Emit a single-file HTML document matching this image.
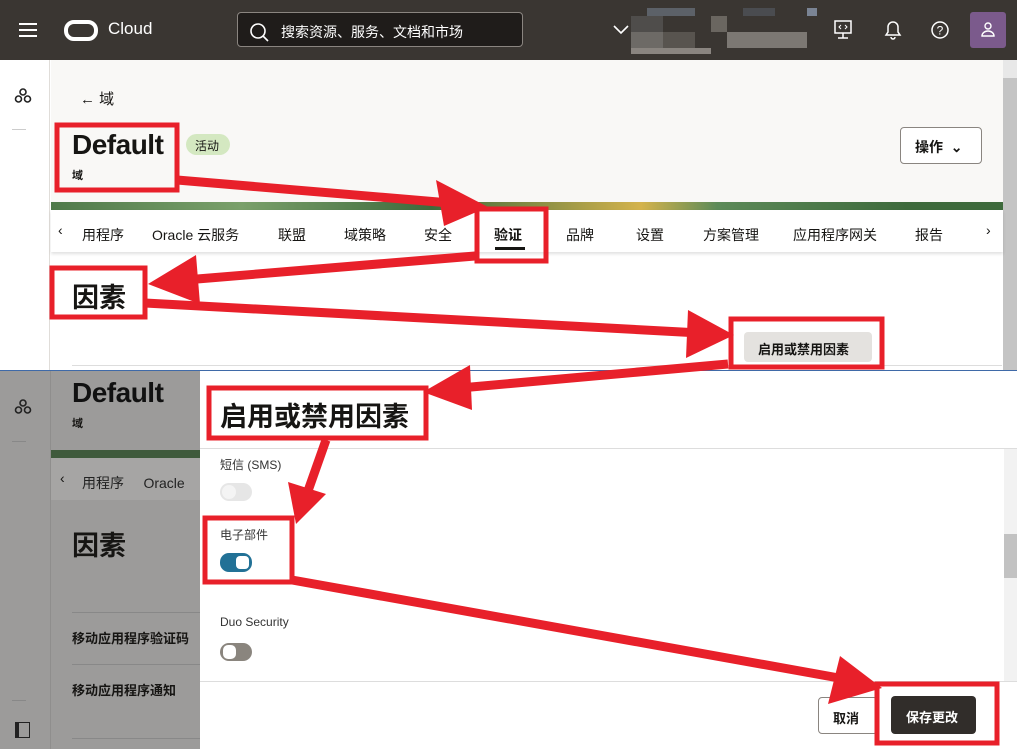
<!DOCTYPE html>
<html><head><meta charset="utf-8"><style>
*{margin:0;padding:0;box-sizing:border-box}
body{width:1017px;height:749px;overflow:hidden;position:relative;font-family:"Liberation Sans","Noto Sans CJK SC",sans-serif;background:#fff;color:#161513}
.a{position:absolute}
.hdr{left:0;top:0;width:1017px;height:60px;background:#3a3632}
.tab{position:absolute;top:225px;font-size:14px;color:#161513}
</style></head><body>
<div class="a hdr"></div>
<div class="a" style="left:19px;top:23px;width:18px;height:2px;background:#fff;box-shadow:0 6px 0 #fff,0 12px 0 #fff"></div>
<div class="a" style="left:64px;top:20px;width:34px;height:21px;border:4px solid #fff;border-radius:10px"></div>
<div class="a" style="left:108px;top:19px;color:#fff;font-size:17px">Cloud</div>
<div class="a" style="left:237px;top:12px;width:286px;height:35px;border:1px solid #8a8580;border-radius:4px;background:#1f1c1a"></div>
<svg class="a" style="left:248px;top:21px" width="22" height="22"><circle cx="10" cy="10" r="7" fill="none" stroke="#fff" stroke-width="1.6"/><line x1="15" y1="15" x2="20" y2="20" stroke="#fff" stroke-width="1.6"/></svg>
<div class="a" style="left:281px;top:22px;color:#fff;font-size:14px">搜索资源、服务、文档和市场</div>
<svg class="a" style="left:612px;top:24px" width="18" height="12"><polyline points="2,2 9,9 16,2" fill="none" stroke="#fff" stroke-width="1.6"/></svg>
<div class="a" style="left:647px;top:8px;width:48px;height:8px;background:#5c6168"></div>
<div class="a" style="left:631px;top:16px;width:32px;height:16px;background:#4f4d4b"></div>
<div class="a" style="left:631px;top:32px;width:32px;height:16px;background:#6d6a66"></div>
<div class="a" style="left:663px;top:32px;width:32px;height:16px;background:#58544f"></div>
<div class="a" style="left:711px;top:16px;width:16px;height:16px;background:#6a6660"></div>
<div class="a" style="left:727px;top:32px;width:80px;height:16px;background:#7c7873"></div>
<div class="a" style="left:631px;top:48px;width:80px;height:6px;background:#8a8580"></div>
<div class="a" style="left:743px;top:8px;width:32px;height:8px;background:#4a4c50"></div>
<div class="a" style="left:807px;top:8px;width:10px;height:8px;background:#7a8494"></div>
<svg class="a" style="left:832px;top:18px" width="24" height="24"><rect x="3" y="3" width="16" height="12" fill="none" stroke="#fff" stroke-width="1.5"/><line x1="11" y1="15" x2="11" y2="20" stroke="#fff" stroke-width="1.5"/><line x1="6" y1="20" x2="16" y2="20" stroke="#fff" stroke-width="1.5"/><polyline points="9,7 7,9 9,11" fill="none" stroke="#fff"/><polyline points="13,7 15,9 13,11" fill="none" stroke="#fff"/></svg>
<svg class="a" style="left:882px;top:18px" width="22" height="24"><path d="M4 17 L6 14 L6 9 A5 5 0 0 1 16 9 L16 14 L18 17 Z M9 19 A2 2 0 0 0 13 19" fill="none" stroke="#fff" stroke-width="1.5"/></svg>
<svg class="a" style="left:929px;top:19px" width="22" height="22"><circle cx="11" cy="11" r="8" fill="none" stroke="#fff" stroke-width="1.5"/><text x="11" y="15.5" font-size="12" fill="#fff" text-anchor="middle" font-family="Liberation Sans">?</text></svg>
<div class="a" style="left:970px;top:12px;width:36px;height:36px;background:#7b5a8c;border-radius:3px"></div>
<svg class="a" style="left:979px;top:20px" width="18" height="20"><circle cx="9" cy="6" r="3" fill="none" stroke="#fff" stroke-width="1.4"/><path d="M3 16 A6 5 0 0 1 15 16 Z" fill="none" stroke="#fff" stroke-width="1.4"/></svg>

<div class="a" style="left:0;top:60px;width:50px;height:310px;background:#fff;border-right:1px solid #e0ddd9"></div>
<svg class="a" style="left:13px;top:87px" width="20" height="18"><g fill="none" stroke="#222" stroke-width="1.6"><circle cx="10" cy="5" r="3"/><circle cx="5.5" cy="12" r="3"/><circle cx="14.5" cy="12" r="3"/></g></svg>
<div class="a" style="left:12px;top:129px;width:14px;height:1px;background:#ccc"></div>
<div class="a" style="left:51px;top:60px;width:952px;height:142px;background:#f9f8f6"></div>
<div class="a" style="left:1003px;top:60px;width:14px;height:310px;background:#e8e8e8"></div>
<div class="a" style="left:1003px;top:78px;width:14px;height:292px;background:#c4c4c4"></div>
<div class="a" style="left:80px;top:88px;font-size:15px">← 域</div>
<div class="a" style="left:72px;top:129px;font-size:28px;font-weight:bold;letter-spacing:-0.5px">Default</div>
<div class="a" style="left:72px;top:167px;font-size:11px;font-weight:bold">域</div>
<div class="a" style="left:186px;top:134px;width:44px;height:21px;border-radius:11px;background:#d4e8c1;font-size:12px;padding:3px 0 0 9px">活动</div>
<div class="a" style="left:900px;top:127px;width:82px;height:37px;border:1px solid #8a8580;border-radius:4px;background:#fff;font-size:14px;font-weight:bold;padding:9px 0 0 14px">操作 &nbsp;⌄</div>
<div class="a" style="left:51px;top:202px;width:952px;height:8px;background:linear-gradient(90deg,#4f7a4a,#7aa06a 20%,#3e6a3c 40%,#d4b34c 62%,#5c8a58 70%,#3e6a3c 90%)"></div>
<div class="a" style="left:51px;top:210px;width:952px;height:42px;background:#fff;box-shadow:0 2px 3px rgba(0,0,0,.12)"></div>
<div class="tab" style="left:58px;top:222px">‹</div>
<div class="tab" style="left:82px">用程序</div>
<div class="tab" style="left:152px">Oracle 云服务</div>
<div class="tab" style="left:278px">联盟</div>
<div class="tab" style="left:344px">域策略</div>
<div class="tab" style="left:424px">安全</div>
<div class="tab" style="left:494px;font-weight:bold">验证</div>
<div class="a" style="left:495px;top:247px;width:30px;height:3px;background:#161513"></div>
<div class="tab" style="left:566px">品牌</div>
<div class="tab" style="left:636px">设置</div>
<div class="tab" style="left:703px">方案管理</div>
<div class="tab" style="left:793px">应用程序网关</div>
<div class="tab" style="left:915px">报告</div>
<div class="tab" style="left:986px;top:222px">›</div>
<div class="a" style="left:72px;top:276px;font-size:27px;font-weight:bold">因素</div>
<div class="a" style="left:744px;top:332px;width:128px;height:30px;background:#e4e2df;border-radius:4px;font-size:13px;font-weight:bold;padding:7px 0 0 14px">启用或禁用因素</div>
<div class="a" style="left:72px;top:365px;width:930px;height:1px;background:#ddd"></div>

<div class="a" style="left:0;top:370px;width:1017px;height:379px;background:#a0a0a0;border-top:1px solid #3f6aa8"></div>
<div class="a" style="left:0;top:371px;width:200px;height:378px;background:#9c9b9a"></div>
<div class="a" style="left:50px;top:371px;width:1px;height:378px;background:#8f8e8d"></div>
<svg class="a" style="left:13px;top:398px" width="20" height="18"><g fill="none" stroke="#222" stroke-width="1.6"><circle cx="10" cy="5" r="3"/><circle cx="5.5" cy="12" r="3"/><circle cx="14.5" cy="12" r="3"/></g></svg>
<div class="a" style="left:12px;top:441px;width:14px;height:1px;background:#888"></div>
<div class="a" style="left:12px;top:700px;width:14px;height:1px;background:#888"></div>
<div class="a" style="left:15px;top:722px;width:15px;height:16px;border:1.5px solid #222;border-left-width:4px"></div>
<div class="a" style="left:72px;top:377px;font-size:28px;font-weight:bold;color:#111;letter-spacing:-0.5px">Default</div>
<div class="a" style="left:72px;top:415px;font-size:11px;font-weight:bold">域</div>
<div class="a" style="left:51px;top:450px;width:149px;height:8px;background:#3f5a3c"></div>
<div class="a" style="left:51px;top:458px;width:149px;height:42px;background:#a6a5a4"></div>
<div class="a" style="left:60px;top:470px;font-size:14px">‹</div>
<div class="a" style="left:82px;top:473px;font-size:14px;color:#222">用程序 &nbsp;&nbsp;&nbsp;&nbsp;Oracle</div>
<div class="a" style="left:72px;top:524px;font-size:27px;font-weight:bold">因素</div>
<div class="a" style="left:72px;top:612px;width:128px;height:1px;background:#888"></div>
<div class="a" style="left:72px;top:628px;font-size:13px;font-weight:bold">移动应用程序验证码</div>
<div class="a" style="left:72px;top:664px;width:128px;height:1px;background:#888"></div>
<div class="a" style="left:72px;top:680px;font-size:13px;font-weight:bold">移动应用程序通知</div>
<div class="a" style="left:72px;top:738px;width:128px;height:1px;background:#888"></div>

<div class="a" style="left:200px;top:371px;width:817px;height:378px;background:#fff"></div>
<div class="a" style="left:220px;top:395px;font-size:27px;font-weight:bold">启用或禁用因素</div>
<div class="a" style="left:200px;top:448px;width:817px;height:1px;background:#ddd"></div>
<div class="a" style="left:1004px;top:449px;width:13px;height:232px;background:#f2f2f2"></div>
<div class="a" style="left:1004px;top:534px;width:13px;height:44px;background:#c2c2c2"></div>
<div class="a" style="left:220px;top:456px;font-size:12px;color:#333">短信 (SMS)</div>
<div class="a" style="left:220px;top:483px;width:32px;height:18px;border-radius:9px;background:#e6e6e6"></div>
<div class="a" style="left:222px;top:485px;width:14px;height:14px;border-radius:7px;background:#f4f4f4"></div>
<div class="a" style="left:220px;top:526px;font-size:12px;color:#333">电子部件</div>
<div class="a" style="left:220px;top:553px;width:32px;height:19px;border-radius:9px;background:#227196"></div>
<div class="a" style="left:236px;top:556px;width:13px;height:13px;border-radius:4px;background:#fff"></div>
<div class="a" style="left:220px;top:615px;font-size:12px;color:#333">Duo Security</div>
<div class="a" style="left:220px;top:643px;width:32px;height:18px;border-radius:9px;background:#8a857e"></div>
<div class="a" style="left:223px;top:645px;width:13px;height:14px;border-radius:5px;background:#fff"></div>
<div class="a" style="left:200px;top:681px;width:817px;height:1px;background:#ddd"></div>
<div class="a" style="left:818px;top:697px;width:60px;height:37px;border:1px solid #8a8580;border-radius:4px;font-size:13px;font-weight:bold;padding:10px 0 0 14px">取消</div>
<div class="a" style="left:891px;top:696px;width:85px;height:38px;background:#312d2a;border-radius:4px;color:#fff;font-size:13px;font-weight:bold;padding:11px 0 0 15px">保存更改</div>

<svg class="a" style="left:0;top:0" width="1017" height="749">
<g fill="none" stroke="#e8202a" stroke-width="5">
<rect x="57" y="125" width="120" height="65"/>
<rect x="477" y="209" width="69" height="52"/>
<rect x="52" y="268" width="93" height="49"/>
<rect x="731" y="319" width="151" height="48"/>
<rect x="209" y="388" width="217" height="50"/>
<rect x="205" y="518" width="87" height="64"/>
<rect x="877" y="684" width="120" height="59"/>
</g>
<g stroke="#e8202a" stroke-width="9">
<line x1="177" y1="180" x2="450" y2="203"/>
<line x1="475" y1="256" x2="185" y2="280"/>
<line x1="145" y1="303" x2="700" y2="333"/>
<line x1="728" y1="364" x2="460" y2="388"/>
<line x1="326" y1="440" x2="303" y2="505"/>
<line x1="292" y1="580" x2="850" y2="680"/>
</g>
<g fill="#e8202a">
<polygon points="488,207 436,180 444,226"/>
<polygon points="148,284 196,255 200,304"/>
<polygon points="734,335 688,310 686,358"/>
<polygon points="423,392 470,365 472,410"/>
<polygon points="296,524 288,482 326,494"/>
<polygon points="882,688 840,656 828,704"/>
</g>
</svg>
</body></html>
